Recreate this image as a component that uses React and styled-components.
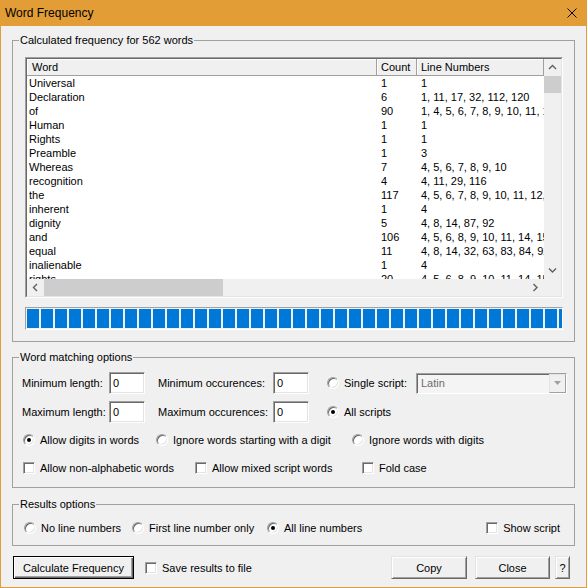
import React from 'react';
import styled, { createGlobalStyle } from 'styled-components';

const GlobalStyle = createGlobalStyle`
  html, body {
    margin: 0;
    padding: 0;
    background: #f0f0f0;
  }
  body {
    font-family: "Liberation Sans", Arial, sans-serif;
    font-size: 11px;
    color: #000;
  }
  * {
    box-sizing: border-box;
  }
`;

const Window = styled.div`
  width: 587px;
  height: 588px;
  display: flex;
  flex-direction: column;
  background: #f0f0f0;
  border: 1px solid #e39d37;
  border-top: none;
`;

const TitleBar = styled.div`
  height: 26px;
  flex: none;
  display: flex;
  align-items: center;
  justify-content: space-between;
  background: #e39d37;
  padding: 0 9px 0 4px;
  font-size: 12px;
`;

const Content = styled.div`
  flex: 1;
  display: flex;
  flex-direction: column;
  padding: 7px 11px 8px 11px;
`;

const GroupBox = styled.fieldset`
  margin: ${p => p.$mt || 0}px 0 0 0;
  padding: 0;
  min-width: 0;
  border: 1px solid #a0a0a0;
`;

const Legend = styled.legend`
  margin-left: 6px;
  padding: 0 1px;
  line-height: 14px;
`;

const GroupBody = styled.div`
  display: flex;
  flex-direction: column;
  padding: ${p => p.$pad};
`;

/* list view */
const ListView = styled.div`
  width: 538px;
  height: 241px;
  border: 1px solid;
  border-color: #a0a0a0 #ffffff #ffffff #a0a0a0;
`;

const ListInner = styled.div`
  height: 100%;
  border: 1px solid;
  border-color: #696969 #e3e3e3 #e3e3e3 #696969;
  background: #fff;
  display: grid;
  grid-template-columns: 517px 17px;
  grid-template-rows: 220px 17px;
`;

const ListMain = styled.div`
  overflow: hidden;
`;

const HeaderRow = styled.div`
  display: grid;
  grid-template-columns: 350px 40px 1fr;
  height: 17px;
  background: #f0f0f0;
  border-bottom: 1px solid #a0a0a0;
`;

const HeaderCell = styled.div`
  display: flex;
  align-items: center;
  padding-left: ${p => p.$pl}px;
  border-right: 1px solid #a0a0a0;
  box-shadow: inset 1px 1px #fff;
  white-space: nowrap;
  overflow: hidden;
`;

const Row = styled.div`
  display: grid;
  grid-template-columns: 350px 40px 1fr;
  height: 14px;
  line-height: 14px;
`;

const Cell = styled.div`
  padding-left: ${p => p.$pl}px;
  white-space: nowrap;
  overflow: hidden;
`;

const VScroll = styled.div`
  display: flex;
  flex-direction: column;
  background: #f0f0f0;
`;

const HScroll = styled.div`
  display: flex;
  background: #f0f0f0;
`;

const ArrowBox = styled.div`
  width: 17px;
  height: 17px;
  flex: none;
  display: flex;
  align-items: center;
  justify-content: center;
`;

const Thumb = styled.div`
  flex: none;
  background: #cdcdcd;
  width: ${p => p.$w || '100%'};
  height: ${p => p.$h || '100%'};
`;

const Spacer = styled.div`
  flex: 1;
`;

const Corner = styled.div`
  background: #f0f0f0;
`;

const Progress = styled.div`
  margin-top: 9px;
  width: 538px;
  height: 23px;
  padding: 1px;
  display: flex;
  gap: 2px;
  overflow: hidden;
  background: #f0f0f0;
  border: 1px solid;
  border-color: #a0a0a0 #ffffff #ffffff #a0a0a0;
`;

const Chunk = styled.div`
  flex: none;
  width: 12px;
  height: 19px;
  background: #0078d7;
`;

/* form controls */
const FormRow = styled.div`
  display: flex;
  align-items: center;
  height: ${p => p.$h}px;
  margin-top: ${p => p.$mt || 0}px;
  padding-right: ${p => p.$pr || 0}px;
`;

const Label = styled.div`
  flex: none;
  width: ${p => p.$w}px;
  margin-left: ${p => p.$ml || 0}px;
  white-space: nowrap;
`;

const TextBox = styled.div`
  flex: none;
  width: 36px;
  height: 22px;
  padding: 2px 0 0 3px;
  background: #fff;
  border: 1px solid;
  border-color: #a0a0a0 #ffffff #ffffff #a0a0a0;
  box-shadow: inset 1px 1px #696969, inset -1px -1px #e3e3e3;
  line-height: 16px;
`;

const Option = styled.label`
  flex: none;
  display: flex;
  align-items: center;
  width: ${p => (p.$w ? `${p.$w}px` : 'auto')};
  margin-left: ${p => (p.$ml === 'auto' ? 'auto' : `${p.$ml || 0}px`)};
  white-space: nowrap;
  line-height: 16px;
`;

const RadioMark = styled.span`
  flex: none;
  width: 12px;
  height: 12px;
  margin: 0 5px 0 1px;
  border-radius: 50%;
  background: #fff;
  border: 1px solid;
  border-color: #a0a0a0 #ffffff #ffffff #a0a0a0;
  box-shadow: inset 1px 1px #696969, inset -1px -1px #e3e3e3;
  display: flex;
  align-items: center;
  justify-content: center;
  &::after {
    content: '';
    width: 4px;
    height: 4px;
    border-radius: 50%;
    background: ${p => (p.$on ? '#000' : 'transparent')};
  }
`;

const CheckMark = styled.span`
  flex: none;
  width: 12px;
  height: 12px;
  margin: 0 5px 0 1px;
  background: #fff;
  border: 1px solid;
  border-color: #a0a0a0 #ffffff #ffffff #a0a0a0;
  box-shadow: inset 1px 1px #696969, inset -1px -1px #e3e3e3;
`;

const Select = styled.div`
  flex: none;
  width: 151px;
  height: 21px;
  display: flex;
  align-items: center;
  background: #f4f4f4;
  border: 1px solid;
  border-color: #a0a0a0 #ffffff #ffffff #a0a0a0;
  box-shadow: inset 1px 1px #696969;
  color: #6d6d6d;
  padding-left: 4px;
`;

const SelectButton = styled.div`
  margin-left: auto;
  width: 17px;
  height: 19px;
  display: flex;
  align-items: center;
  justify-content: center;
  background: #f0f0f0;
  border: 1px solid;
  border-color: #e3e3e3 #a0a0a0 #a0a0a0 #e3e3e3;
`;

const ButtonRow = styled.div`
  display: flex;
  align-items: center;
  margin-top: 10px;
  padding: 0 5px 0 1px;
`;

const Button = styled.div`
  flex: none;
  width: ${p => p.$w}px;
  height: 23px;
  margin-left: ${p => (p.$ml === 'auto' ? 'auto' : `${p.$ml || 0}px`)};
  display: flex;
  align-items: center;
  justify-content: center;
  background: #f0f0f0;
  border: 1px solid;
  border-color: ${p => (p.$default ? '#000' : '#e3e3e3 #696969 #696969 #e3e3e3')};
  box-shadow: ${p =>
    p.$default
      ? 'inset 1px 1px #fff, inset -1px -1px #696969, inset -2px -2px #a0a0a0'
      : 'inset 1px 1px #fff, inset -1px -1px #a0a0a0'};
`;

const Chevron = ({ dir }) => {
  const paths = {
    up: 'M1 5 L4.5 1.5 L8 5',
    down: 'M1 1.5 L4.5 5 L8 1.5',
    left: 'M5 1 L1.5 4.5 L5 8',
    right: 'M1.5 1 L5 4.5 L1.5 8',
  };
  const horiz = dir === 'left' || dir === 'right';
  return (
    <svg width={horiz ? 7 : 9} height={horiz ? 9 : 7} viewBox={horiz ? '0 0 7 9' : '0 0 9 7'}>
      <path d={paths[dir]} fill="none" stroke="#606060" strokeWidth="1.4" />
    </svg>
  );
};

const words = [
  ['Universal', '1', '1'],
  ['Declaration', '6', '1, 11, 17, 32, 112, 120'],
  ['of', '90', '1, 4, 5, 6, 7, 8, 9, 10, 11, 12, 13'],
  ['Human', '1', '1'],
  ['Rights', '1', '1'],
  ['Preamble', '1', '3'],
  ['Whereas', '7', '4, 5, 6, 7, 8, 9, 10'],
  ['recognition', '4', '4, 11, 29, 116'],
  ['the', '117', '4, 5, 6, 7, 8, 9, 10, 11, 12, 13'],
  ['inherent', '1', '4'],
  ['dignity', '5', '4, 8, 14, 87, 92'],
  ['and', '106', '4, 5, 6, 8, 9, 10, 11, 14, 15, 16'],
  ['equal', '11', '4, 8, 14, 32, 63, 83, 84, 92, 98'],
  ['inalienable', '1', '4'],
  ['rights', '20', '4, 5, 6, 8, 9, 10, 11, 14, 15, 16'],
];

export default function App() {
  return (
    <>
      <GlobalStyle />
      <Window>
        <TitleBar>
          <span>Word Frequency</span>
          <svg width="10" height="10" viewBox="0 0 10 10">
            <path d="M0.5 0.5 L9.5 9.5 M9.5 0.5 L0.5 9.5" stroke="#000" strokeWidth="1" />
          </svg>
        </TitleBar>
        <Content>
          <GroupBox>
            <Legend>Calculated frequency for 562 words</Legend>
            <GroupBody $pad="10px 11px 11px 12px">
              <ListView>
                <ListInner>
                  <ListMain>
                    <HeaderRow>
                      <HeaderCell $pl={5}>Word</HeaderCell>
                      <HeaderCell $pl={4}>Count</HeaderCell>
                      <HeaderCell $pl={4}>Line Numbers</HeaderCell>
                    </HeaderRow>
                    {words.map(([w, c, l]) => (
                      <Row key={w}>
                        <Cell $pl={2}>{w}</Cell>
                        <Cell $pl={4}>{c}</Cell>
                        <Cell $pl={4}>{l}</Cell>
                      </Row>
                    ))}
                  </ListMain>
                  <VScroll>
                    <ArrowBox><Chevron dir="up" /></ArrowBox>
                    <Thumb $h="17px" />
                    <Spacer />
                    <ArrowBox><Chevron dir="down" /></ArrowBox>
                  </VScroll>
                  <HScroll>
                    <ArrowBox><Chevron dir="left" /></ArrowBox>
                    <Thumb $w="179px" />
                    <Spacer />
                    <ArrowBox><Chevron dir="right" /></ArrowBox>
                  </HScroll>
                  <Corner />
                </ListInner>
              </ListView>
              <Progress>
                {Array.from({ length: 39 }, (_, i) => (
                  <Chunk key={i} />
                ))}
              </Progress>
            </GroupBody>
          </GroupBox>

          <GroupBox $mt={8}>
            <Legend>Word matching options</Legend>
            <GroupBody $pad="8px 0 11px 9px">
              <FormRow $h={22}>
                <Label $w={87}>Minimum length:</Label>
                <TextBox>0</TextBox>
                <Label $w={115} $ml={13}>Minimum occurences:</Label>
                <TextBox>0</TextBox>
                <Option $w={90} $ml={17}>
                  <RadioMark />
                  Single script:
                </Option>
                <Select>
                  Latin
                  <SelectButton>
                    <svg width="7" height="4" viewBox="0 0 7 4">
                      <path d="M0 0 L7 0 L3.5 4 Z" fill="#a0a0a0" />
                    </svg>
                  </SelectButton>
                </Select>
              </FormRow>
              <FormRow $h={22} $mt={7}>
                <Label $w={87}>Maximum length:</Label>
                <TextBox>0</TextBox>
                <Label $w={115} $ml={13}>Maximum occurences:</Label>
                <TextBox>0</TextBox>
                <Option $ml={17}>
                  <RadioMark $on />
                  All scripts
                </Option>
              </FormRow>
              <FormRow $h={16} $mt={9}>
                <Option $w={133}>
                  <RadioMark $on />
                  Allow digits in words
                </Option>
                <Option $w={196}>
                  <RadioMark />
                  Ignore words starting with a digit
                </Option>
                <Option>
                  <RadioMark />
                  Ignore words with digits
                </Option>
              </FormRow>
              <FormRow $h={16} $mt={12}>
                <Option $w={172}>
                  <CheckMark />
                  Allow non-alphabetic words
                </Option>
                <Option $w={167}>
                  <CheckMark />
                  Allow mixed script words
                </Option>
                <Option>
                  <CheckMark />
                  Fold case
                </Option>
              </FormRow>
            </GroupBody>
          </GroupBox>

          <GroupBox $mt={9}>
            <Legend>Results options</Legend>
            <GroupBody $pad="9px 0 9px 10px">
              <FormRow $h={16} $pr={14}>
                <Option $w={108}>
                  <RadioMark />
                  No line numbers
                </Option>
                <Option $w={135}>
                  <RadioMark />
                  First line number only
                </Option>
                <Option>
                  <RadioMark $on />
                  All line numbers
                </Option>
                <Option $ml="auto">
                  <CheckMark />
                  Show script
                </Option>
              </FormRow>
            </GroupBody>
          </GroupBox>

          <ButtonRow>
            <Button $w={121} $default>Calculate Frequency</Button>
            <Option $ml={10}>
              <CheckMark />
              Save results to file
            </Option>
            <Button $w={76} $ml="auto">Copy</Button>
            <Button $w={75} $ml={8}>Close</Button>
            <Button $w={15} $ml={5}>?</Button>
          </ButtonRow>
        </Content>
      </Window>
    </>
  );
}
